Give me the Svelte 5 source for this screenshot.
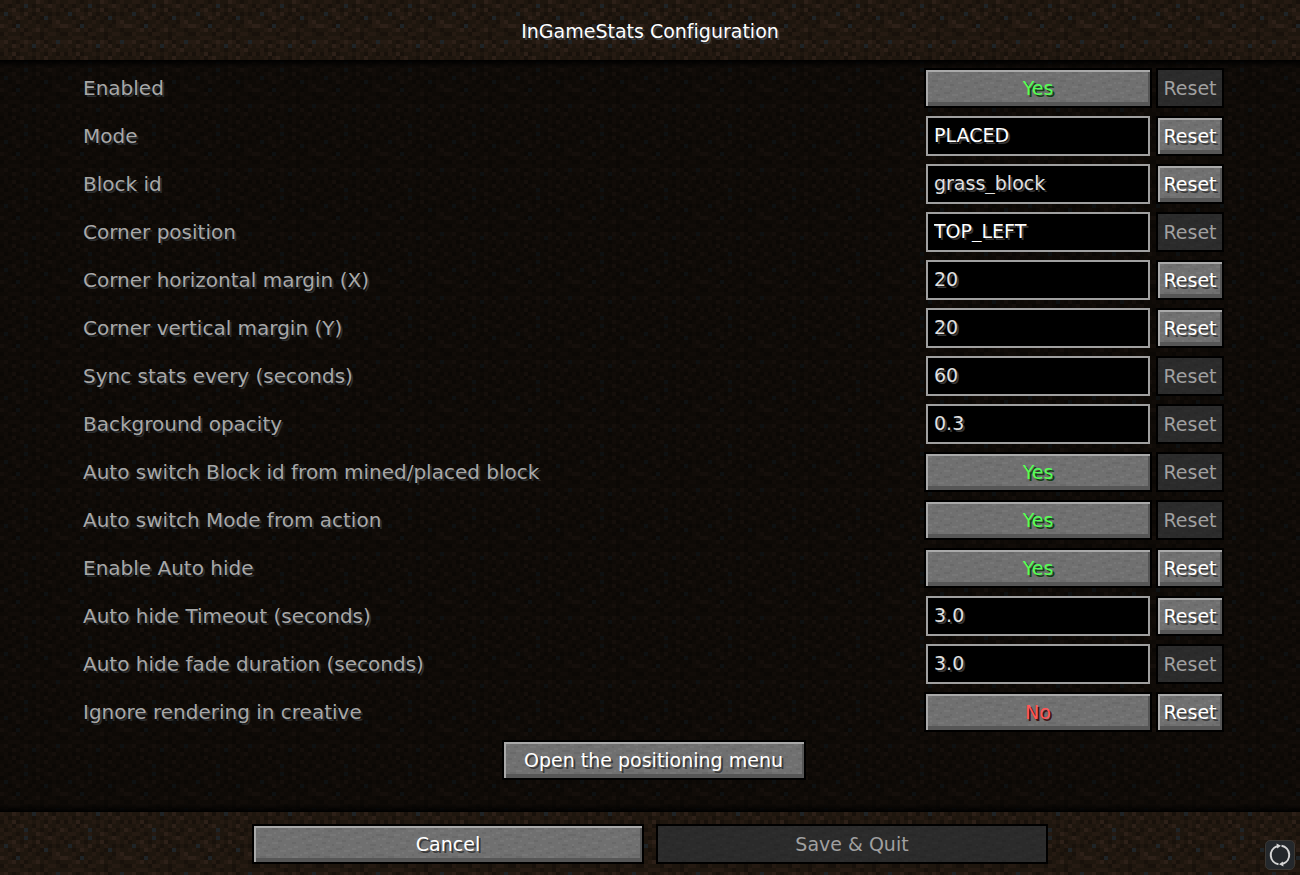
<script lang="ts">
  type Option = {
    id: string;
    label: string;
    kind: 'toggle' | 'text';
    value: string;
    changed: boolean;
    bright?: boolean;
  };

  let options: Option[] = $state([
    { id: 'enabled', label: 'Enabled', kind: 'toggle', value: 'Yes', changed: false },
    { id: 'mode', label: 'Mode', kind: 'text', value: 'PLACED', changed: true, bright: true },
    { id: 'block', label: 'Block id', kind: 'text', value: 'grass_block', changed: true },
    { id: 'corner', label: 'Corner position', kind: 'text', value: 'TOP_LEFT', changed: false, bright: true },
    { id: 'margin-x', label: 'Corner horizontal margin (X)', kind: 'text', value: '20', changed: true },
    { id: 'margin-y', label: 'Corner vertical margin (Y)', kind: 'text', value: '20', changed: true },
    { id: 'sync', label: 'Sync stats every (seconds)', kind: 'text', value: '60', changed: false },
    { id: 'opacity', label: 'Background opacity', kind: 'text', value: '0.3', changed: false },
    { id: 'auto-block', label: 'Auto switch Block id from mined/placed block', kind: 'toggle', value: 'Yes', changed: false },
    { id: 'auto-mode', label: 'Auto switch Mode from action', kind: 'toggle', value: 'Yes', changed: false },
    { id: 'auto-hide', label: 'Enable Auto hide', kind: 'toggle', value: 'Yes', changed: true },
    { id: 'timeout', label: 'Auto hide Timeout (seconds)', kind: 'text', value: '3.0', changed: true },
    { id: 'fade', label: 'Auto hide fade duration (seconds)', kind: 'text', value: '3.0', changed: false },
    { id: 'creative', label: 'Ignore rendering in creative', kind: 'toggle', value: 'No', changed: true }
  ]);

  // One character per block pixel, looked up in the palette
  const dirtRows = [
    'bccbabcbbdcbabcb',
    'cbabcbsbabbcdcba',
    'abcdbabcbdabbcbc',
    'bsbccbdbabcbabab',
    'cbabdcbacbasbcbb',
    'bbcbabbcbabbacdb',
    'dcbasbcbbcbabccd',
    'bbcdbcabcdbcbbab',
    'acbbbaccbbabccba',
    'bbcccbbabbacbbbb',
    'cdbabcdcbdcabcsc',
    'cbbdcacbscbdbacb',
    'bcabbccbabcbcdbb',
    'acbdabbcbcbacbac',
    'bbcacdbbacbdbbcb',
    'cabcbbsbcbabcabd'
  ];
  const dirtColors = { a: '#18110b', b: '#1e160e', c: '#251a12', d: '#2d2018', s: '#1f2427' };

  const stoneRows = [
    'aaaabbaaaaaacaaaaaaabbaaaaaaaaac',
    'abbaaaaaacccaaaaabbaaaaaaaccaaaa',
    'aaaaaccaaaaaabbbaaaaaacaaaaaabba',
    'aabaaaaaaabaaaaaaaccaaaaabbaaaaa',
    'caaaaabbbaaaaaacaaaaaaabaaaaaccc',
    'aaacccaaaaaabaaaaaabbbaaaaacaaaa',
    'bbaaaaaaacaaaaaabbaaaaaaccaaaaba',
    'aaaaabaaaaaaccaaaaaaaaaaaaabbaaa',
    'aaccaaaaabbbaaaaaaaccaaabaaaaaaa',
    'aaaaaaacaaaaaaabaaaaaaaaaacccaab'
  ];
  const stoneColors = { a: '#707070', b: '#777777', c: '#696969' };
  const darkStoneColors = { a: '#2b2b2b', b: '#2e2e2e', c: '#282828' };

  function tile(rows: string[], colors: Record<string, string>, size: number): string {
    let cells = '';
    rows.forEach((row, y) => {
      [...row].forEach((key, x) => {
        cells += `<rect x='${x * size}' y='${y * size}' width='${size}' height='${size}' fill='${colors[key]}'/>`;
      });
    });
    const svg = `<svg xmlns='http://www.w3.org/2000/svg' width='${rows[0].length * size}' height='${rows.length * size}' shape-rendering='crispEdges'>${cells}</svg>`;
    return `url("data:image/svg+xml,${encodeURIComponent(svg).replace(/'/g, '%27')}")`;
  }

  const dirt = tile(dirtRows, dirtColors, 4);
  const stone = tile(stoneRows, stoneColors, 2);
  const darkStone = tile(stoneRows, darkStoneColors, 2);

  function toggle(option: Option) {
    option.value = option.value === 'Yes' ? 'No' : 'Yes';
    option.changed = true;
  }
</script>

<svelte:head>
  <title>InGameStats Configuration</title>
</svelte:head>

<div class="screen" style:--dirt={dirt} style:--stone={stone} style:--dark-stone={darkStone}>
  <header class="header">
    <h1>InGameStats Configuration</h1>
  </header>

  <main class="list">
    {#each options as option (option.id)}
      <div class="row">
        <label for={option.id}>{option.label}</label>
        {#if option.kind === 'toggle'}
          <button
            id={option.id}
            type="button"
            class="mc-button"
            class:yes={option.value === 'Yes'}
            class:no={option.value === 'No'}
            onclick={() => toggle(option)}>{option.value}</button>
        {:else}
          <input
            id={option.id}
            type="text"
            class:bright={option.bright}
            bind:value={option.value}
            oninput={() => (option.changed = true)}
          />
        {/if}
        <button type="button" class="mc-button" disabled={!option.changed}>Reset</button>
      </div>
    {/each}
    <div class="menu-row">
      <button type="button" class="mc-button menu-button">Open the positioning menu</button>
    </div>
  </main>

  <footer class="footer">
    <button type="button" class="mc-button">Cancel</button>
    <button type="button" class="mc-button" disabled>Save &amp; Quit</button>
  </footer>

  <button type="button" class="reload" aria-label="Reload">
    <svg width="24" height="24" viewBox="0 0 24 24" fill="none" stroke="#d6d6d6" stroke-width="2">
      <path d="M9 3.2A9.4 9.4 0 0 0 10.5 21.3M15 20.8A9.4 9.4 0 0 0 13.5 2.7" />
      <path d="M8.5 .5L13 2.8L9.2 5.6ZM15.5 23.5L11 21.2L14.8 18.4Z" fill="#d6d6d6" stroke="none" />
    </svg>
  </button>
</div>

<style>
  :global(body) {
    background: #0e0a06;
  }

  .screen {
    min-height: 100vh;
    display: flex;
    flex-direction: column;
    background: var(--dirt) fixed;
    font-family: 'DejaVu Sans', sans-serif;
    font-size: 19px;
    font-variant-ligatures: none;
    line-height: 24px;
    color: #fff;
  }

  button,
  input {
    box-sizing: border-box;
    font: inherit;
    color: inherit;
    margin: 0;
  }

  .header {
    box-sizing: border-box;
    height: 60px;
    padding-top: 2px;
    display: flex;
    align-items: center;
    justify-content: center;
  }

  h1 {
    margin: 0;
    font-size: inherit;
    font-weight: 400;
    text-shadow: 2px 2px #3e4246;
  }

  .list {
    flex: 1;
    padding: 4px 76px 28px 83px;
    background:
      linear-gradient(#000, transparent) top / 100% 8px no-repeat,
      linear-gradient(transparent, #000) bottom / 100% 8px no-repeat,
      linear-gradient(rgba(0, 0, 0, 0.54), rgba(0, 0, 0, 0.54));
  }

  .row {
    height: 48px;
    display: grid;
    grid-template-columns: 1fr 228px 68px;
    column-gap: 4px;
    align-items: center;
  }

  label {
    font-size: 20px;
    color: #a8a8a8;
    text-shadow: 2px 2px #2b2e30;
  }

  input {
    height: 40px;
    margin: 0 2px;
    padding: 0 6px 2px;
    border: 2px solid #a0a0a0;
    border-radius: 0;
    outline: none;
    background: #000;
    color: #e0e0e0;
    text-shadow: 2px 2px #383838;
  }

  input.bright {
    color: #fff;
  }

  .mc-button {
    height: 40px;
    padding: 0;
    border: 2px solid #000;
    border-radius: 0;
    background: var(--stone);
    box-shadow:
      inset 2px 2px #a9a9a9,
      inset -2px -4px #565656;
    text-shadow: 2px 2px #3a3a3a;
    cursor: pointer;
  }

  .mc-button:disabled {
    background: var(--dark-stone);
    box-shadow: none;
    color: #a0a0a0;
    text-shadow: none;
    cursor: default;
  }

  .yes {
    color: #55ff55;
    text-shadow: 2px 2px #153f15;
  }

  .no {
    color: #ff5555;
    text-shadow: 2px 2px #3f1515;
  }

  .menu-row {
    height: 48px;
    display: flex;
    align-items: center;
    justify-content: center;
  }

  .menu-button {
    width: 304px;
  }

  .footer {
    padding: 12px 16px 11px;
    display: grid;
    grid-template-columns: repeat(2, minmax(0, 392px));
    column-gap: 12px;
    justify-content: center;
  }

  /* Floats over the bottom corner of the screen */
  .reload {
    position: fixed;
    right: 5px;
    bottom: 5px;
    width: 30px;
    height: 30px;
    padding: 0;
    display: flex;
    align-items: center;
    justify-content: center;
    border: 1px solid #3a3733;
    border-radius: 5px;
    background: #24282c;
  }
</style>
